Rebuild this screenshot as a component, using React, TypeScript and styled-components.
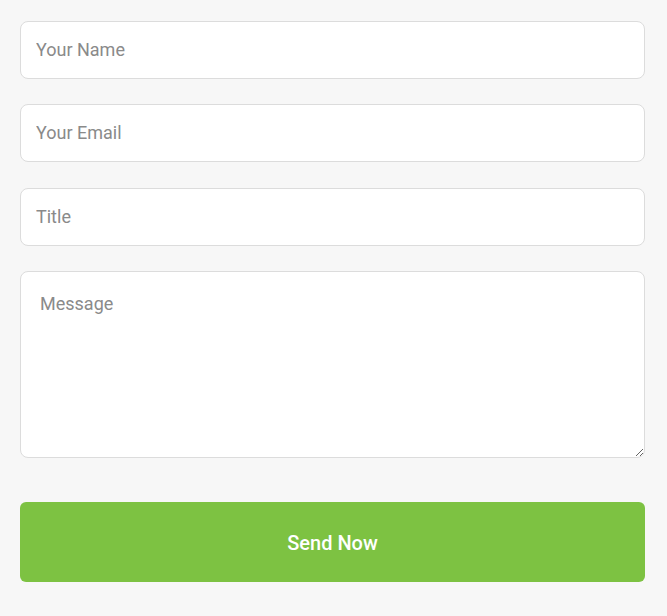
import React from "react";
import styled, { createGlobalStyle } from "styled-components";

const Global = createGlobalStyle`
  html, body { margin: 0; padding: 0; background: #f7f7f7; }
  body { font-family: Roboto, "Noto Sans", sans-serif; }
  * { box-sizing: border-box; }
`;

const Form = styled.form`
  display: flex;
  flex-direction: column;
  padding: 21px 22px 34px 20px;
  width: 667px;
`;

const Field = styled.input<{ $gap?: number }>`
  height: 58px;
  width: 100%;
  margin-bottom: ${(p) => p.$gap ?? 25}px;
  padding: 0 15px 2px;
  border: 1px solid #dcdcdc;
  border-radius: 8px;
  background: #fff;
  font-family: Roboto, sans-serif;
  font-size: 18px;
  color: #333;
  outline: none;
  &::placeholder { color: #8a8a8a; }
`;

const Area = styled.textarea`
  height: 187px;
  width: 100%;
  margin-bottom: 44px;
  padding: 21px 19px;
  border: 1px solid #dcdcdc;
  border-radius: 8px;
  background: #fff;
  font-family: Roboto, sans-serif;
  font-size: 18px;
  color: #333;
  outline: none;
  display: block;
  &::placeholder { color: #8a8a8a; }
`;

const Button = styled.button`
  height: 80px;
  width: 100%;
  padding: 2px 0 0;
  border: none;
  border-radius: 6px;
  background: #7dc242;
  color: #fff;
  font-family: Roboto, sans-serif;
  font-size: 20px;
  font-weight: 500;
  cursor: pointer;
`;

export default function App() {
  return (
    <>
      <Global />
      <Form onSubmit={(e) => e.preventDefault()}>
        <Field placeholder="Your Name" />
        <Field placeholder="Your Email" $gap={26} />
        <Field placeholder="Title" />
        <Area placeholder="Message" />
        <Button type="submit">Send Now</Button>
      </Form>
    </>
  );
}
